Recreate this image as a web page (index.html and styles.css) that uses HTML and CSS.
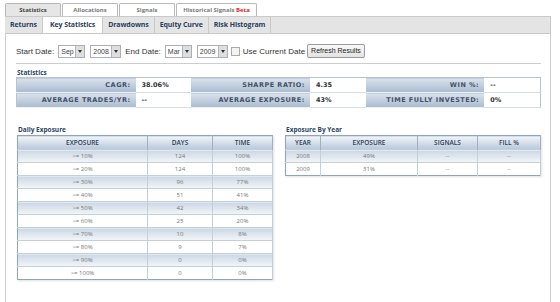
FILE: index.html
```html
<!DOCTYPE html>
<html lang="en">
<head>
    <meta charset="UTF-8">
    <title>Key Statistics</title>
    <link rel="stylesheet" href="styles.css">
</head>
<body>
<div class="page">
    <ul class="tabs">
        <li class="on">Statistics</li>
        <li>Allocations</li>
        <li>Signals</li>
        <li class="wide">Historical Signals <span class="beta">Beta</span></li>
    </ul>

    <ul class="subtabs">
        <li>Returns</li>
        <li class="on">Key Statistics</li>
        <li>Drawdowns</li>
        <li>Equity Curve</li>
        <li>Risk Histogram</li>
    </ul>

    <div class="panel">
        <div class="daterow">
            <span>Start Date:</span>
            <span class="sel s1"><i>Sep</i><b></b></span>
            <span class="sel s2"><i>2008</i><b></b></span>
            <span>End Date:</span>
            <span class="sel s1"><i>Mar</i><b></b></span>
            <span class="sel s2"><i>2009</i><b></b></span>
            <span class="chk"></span>
            <span class="chklabel">Use Current Date</span>
            <span class="btn">Refresh Results</span>
        </div>
        <div class="rule"></div>

        <h4>Statistics</h4>
        <table class="stats">
            <tr>
                <th>CAGR:</th><td class="green">38.06%</td>
                <th>SHARPE RATIO:</th><td class="green">4.35</td>
                <th>WIN %:</th><td>--</td>
            </tr>
            <tr>
                <th>AVERAGE TRADES/YR:</th><td>--</td>
                <th>AVERAGE EXPOSURE:</th><td class="blue">43%</td>
                <th>TIME FULLY INVESTED:</th><td class="blue">0%</td>
            </tr>
        </table>

        <div class="split">
            <div>
                <h4>Daily Exposure</h4>
                <table class="grid">
                    <tr><th>EXPOSURE</th><th class="c2">DAYS</th><th class="c3">TIME</th></tr>
                    <tr class="alt"><td>&gt;= 10%</td><td>124</td><td>100%</td></tr>
                    <tr><td>&gt;= 20%</td><td>124</td><td>100%</td></tr>
                    <tr class="alt"><td>&gt;= 30%</td><td>96</td><td>77%</td></tr>
                    <tr><td>&gt;= 40%</td><td>51</td><td>41%</td></tr>
                    <tr class="alt"><td>&gt;= 50%</td><td>42</td><td>34%</td></tr>
                    <tr><td>&gt;= 60%</td><td>25</td><td>20%</td></tr>
                    <tr class="alt"><td>&gt;= 70%</td><td>10</td><td>8%</td></tr>
                    <tr><td>&gt;= 80%</td><td>9</td><td>7%</td></tr>
                    <tr class="alt"><td>&gt;= 90%</td><td>0</td><td>0%</td></tr>
                    <tr><td>&gt;= 100%</td><td>0</td><td>0%</td></tr>
                </table>
            </div>
            <div>
                <h4>Exposure By Year</h4>
                <table class="grid year">
                    <tr><th class="y1">YEAR</th><th class="y2">EXPOSURE</th><th class="y3">SIGNALS</th><th>FILL %</th></tr>
                    <tr class="alt"><td>2008</td><td>49%</td><td>--</td><td>--</td></tr>
                    <tr><td>2009</td><td>31%</td><td>--</td><td>--</td></tr>
                </table>
            </div>
        </div>
    </div>
</div>
</body>
</html>
```

FILE: styles.css
```css
body {
    margin: 0;
    background: #fff;
    font-family: "Open Sans", "Liberation Sans", sans-serif;
    color: #333;
}

.page {
    padding: 3px 0 0 5px;
    width: 546px;
}

/* top tabs */
ul.tabs {
    display: flex;
    margin: 0;
    padding: 0;
    list-style: none;
    height: 13px;
}

ul.tabs li {
    width: 54px;
    height: 12px;
    border: 1px solid #b9b9b9;
    border-bottom: none;
    border-radius: 2px 2px 0 0;
    margin-right: 1px;
    font-size: 6px;
    font-weight: bold;
    line-height: 12px;
    text-align: center;
    color: #7a7a7a;
    background: #fff;
}

ul.tabs li.on {
    background: #e6e6e6;
    color: #444;
}

ul.tabs li.wide {
    width: 79px;
}

.beta {
    color: #d42a2a;
}

/* sub tabs */
ul.subtabs {
    display: flex;
    margin: 0;
    padding: 0;
    list-style: none;
    height: 16px;
    background: #e4e4e4;
    border: 1px solid #c9c9c9;
    border-left: none;
}

ul.subtabs li {
    padding: 0 5px;
    font-size: 7px;
    font-weight: bold;
    letter-spacing: -0.1px;
    line-height: 16px;
    color: #2a3f5e;
    border-right: 1px solid #c9c9c9;
}

ul.subtabs li.on {
    background: #fff;
    padding: 0 7px;
}

/* panel */
.panel {
    border: 1px solid #cfcfcf;
    border-top: none;
    height: 263px;
    padding: 10px 9px 0 10px;
}

.daterow {
    display: flex;
    align-items: center;
    height: 14px;
    font-family: "Liberation Sans", sans-serif;
    font-size: 8px;
    color: #333;
}

.daterow > span {
    margin-right: 3px;
}

.sel {
    display: inline-flex;
    height: 11px;
    border: 1px solid #a9b0b8;
    background: #fff;
    font-size: 7px;
    line-height: 11px;
    color: #444;
}

.sel i {
    font-style: normal;
    flex: 1;
    padding-left: 2px;
}

.sel b {
    width: 8px;
    background: #dedede;
    border-left: 1px solid #b5b5b5;
    position: relative;
}

.sel b::after {
    content: "";
    position: absolute;
    left: 2px;
    top: 4px;
    border-left: 2px solid transparent;
    border-right: 2px solid transparent;
    border-top: 3px solid #333;
}

.daterow > .s1 {
    width: 25px;
    margin-left: 1px;
    margin-right: 5px;
}

.daterow > .s2 {
    width: 29px;
    margin-right: 4px;
}

.chk {
    width: 7px;
    height: 7px;
    border: 1px solid #aaa;
    background: #f3f3f3;
    margin-left: -1px;
}

.btn {
    height: 12px;
    padding: 0 3px;
    border: 1px solid #9a9a9a;
    border-radius: 2px;
    background: linear-gradient(#fafafa, #e2e2e2);
    font-size: 7px;
    line-height: 12px;
    color: #222;
    margin-left: -1px;
}

.rule {
    height: 1px;
    background: #cdcdcd;
    margin: 5px 0 0 0;
}

h4 {
    margin: 4px 0 0 1px;
    font-size: 6.5px;
    font-weight: bold;
    color: #2a4568;
    line-height: 9px;
}

/* statistics table */
table.stats {
    width: 100%;
    border-collapse: collapse;
    border: 1px solid #b7c3d1;
}

table.stats th {
    height: 14px;
    padding: 0 5px 0 0;
    text-align: right;
    width: 112px;
    font-family: "DejaVu Sans", sans-serif;
    font-size: 6.5px;
    letter-spacing: 0.5px;
    color: #445266;
    background: linear-gradient(#d9e2ec, #a9bbcf);
    border-bottom: 1px solid #eef2f6;
}

table.stats td {
    padding: 0 0 0 6px;
    width: 49px;
    font-family: "DejaVu Sans", sans-serif;
    font-weight: bold;
    font-size: 6.5px;
    color: #333;
    background: #fff;
    border-bottom: 1px solid #d5dde6;
}

td.green {
    color: #3d8a23;
}

td.blue {
    color: #3535b5;
}

/* exposure tables */
.split {
    display: grid;
    grid-template-columns: 1fr 1fr;
    gap: 12px;
    margin-top: 13px;
    padding-left: 1px;
}

.split h4 {
    margin-bottom: 1px;
}

table.grid {
    width: 100%;
    border-collapse: collapse;
    border: 1px solid #8ea3bd;
    box-shadow: 1px 1px 2px rgba(0, 0, 0, 0.12);
}

table.grid th {
    height: 13px;
    padding: 0;
    font-size: 6.5px;
    font-weight: 600;
    color: #2d3f58;
    background: linear-gradient(#f1f4f8, #b7c7da);
    border-right: 1px solid #9fb1c6;
}

table.grid td {
    height: 12px;
    padding: 0;
    text-align: center;
    font-size: 6px;
    color: #777;
    border-right: 1px solid #c4cfdc;
    border-top: 1px solid #c4cfdc;
}

table.grid tr.alt td {
    background: linear-gradient(#cbd7e5, #f3f6f9);
}

th.c2 {
    width: 64px;
}

th.c3 {
    width: 59px;
}

th.y1 {
    width: 34px;
}

th.y2 {
    width: 96px;
}

th.y3 {
    width: 59px;
}
```
